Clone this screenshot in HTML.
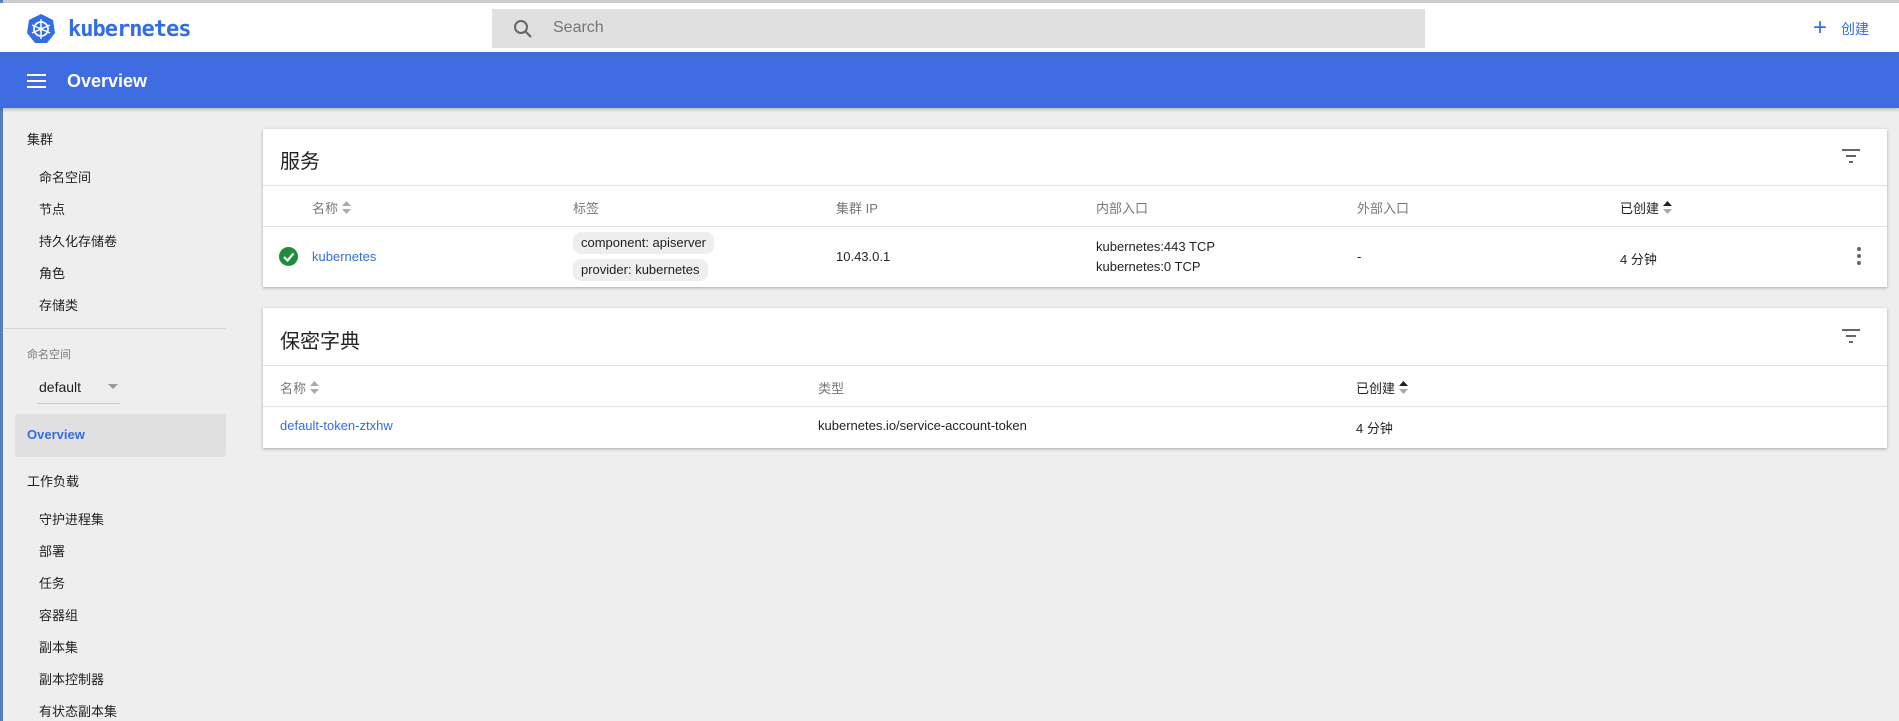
<!DOCTYPE html>
<html><head><meta charset="utf-8"><style>
*{margin:0;padding:0;box-sizing:border-box}
body{width:1899px;height:721px;overflow:hidden;background:#eeeeee;font-family:"Liberation Sans","Noto Sans CJK SC",sans-serif;font-size:13px;color:rgba(0,0,0,.87);position:relative}
.a{position:absolute;white-space:nowrap}
.hdr{position:absolute;left:0;top:3px;width:1899px;height:49px;background:#fff}
.blue{position:absolute;left:0;top:52px;width:1899px;height:56px;background:#3f6ce1;box-shadow:0 2px 3px rgba(0,0,0,.2)}
.card{position:absolute;left:263px;width:1624px;background:#fff;box-shadow:0 1px 3px rgba(0,0,0,.3)}
.line{position:absolute;left:0;width:100%;height:1px;background:#e0e0e0}
.th{color:rgba(0,0,0,.54)}
.lnk{color:#326de6}
.chip{position:absolute;background:#eeeeee;border-radius:8px;height:22px;line-height:22px;padding:0 8px}
.side{font-size:13px}
.srt{display:inline-block;vertical-align:-2px;margin-left:4px}
</style></head><body>
<div class="a" style="left:0;top:0;width:1899px;height:3px;background:#ccc"></div>
<div class="a" style="left:0;top:0;width:3px;height:721px;background:#5a7fb8"></div>
<div class="hdr"></div>
<svg class="a" style="left:26px;top:13px" width="30" height="31" viewBox="0 0 30 31"><polygon points="15,1 27,7 29,20 21,30 9,30 1,20 3,7" fill="#326de6"/><circle cx="15" cy="16" r="7" fill="none" stroke="#fff" stroke-width="1.8"/><g stroke="#fff" stroke-width="1.5"><line x1="15" y1="6" x2="15" y2="26"/><line x1="6" y1="12" x2="24" y2="20"/><line x1="6" y1="20" x2="24" y2="12"/></g><circle cx="15" cy="16" r="2" fill="#fff"/></svg>
<div class="a" style="left:68px;top:17px;font-size:22px;font-weight:bold;color:#326de6;font-family:'DejaVu Sans Mono','Liberation Mono',monospace;letter-spacing:-1px">kubernetes</div>
<div class="a" style="left:492px;top:9px;width:933px;height:39px;background:#e0e0e0"></div>
<svg class="a" style="left:513px;top:19px" width="20" height="20" viewBox="0 0 20 20"><circle cx="8" cy="8" r="6" fill="none" stroke="#666" stroke-width="2"/><line x1="12.5" y1="12.5" x2="18" y2="18" stroke="#666" stroke-width="2.2"/></svg>
<div class="a" style="left:553px;top:19px;font-size:16px;color:#757575">Search</div>
<div class="a" style="left:1813px;top:14px;font-size:24px;color:#326de6;font-weight:300">+</div>
<div class="a" style="left:1841px;top:19px;font-size:14px;color:#326de6">创建</div>
<div class="blue"></div>
<svg class="a" style="left:27px;top:73px" width="19" height="16"><rect y="1" width="19" height="2" fill="#fff"/><rect y="7" width="19" height="2" fill="#fff"/><rect y="13" width="19" height="2" fill="#fff"/></svg>
<div class="a" style="left:67px;top:71px;font-size:18px;font-weight:bold;color:#fff">Overview</div>
<!-- sidebar -->
<div class="a side" style="left:27px;top:129px">集群</div>
<div class="a side" style="left:39px;top:167px">命名空间</div>
<div class="a side" style="left:39px;top:199px">节点</div>
<div class="a side" style="left:39px;top:231px">持久化存储卷</div>
<div class="a side" style="left:39px;top:263px">角色</div>
<div class="a side" style="left:39px;top:295px">存储类</div>
<div class="a" style="left:4px;top:328px;width:222px;height:1px;background:#d6d6d6"></div>
<div class="a" style="left:27px;top:346px;font-size:11px;color:rgba(0,0,0,.5)">命名空间</div>
<div class="a" style="left:39px;top:379px;font-size:14px">default</div>
<div class="a" style="left:108px;top:384px;width:0;height:0;border-left:5px solid transparent;border-right:5px solid transparent;border-top:5px solid #999"></div>
<div class="a" style="left:37px;top:403px;width:83px;height:1px;background:#ccc"></div>
<div class="a" style="left:15px;top:414px;width:211px;height:43px;background:#e0e0e0;border-radius:2px"></div>
<div class="a" style="left:27px;top:427px;color:#326de6;font-weight:bold">Overview</div>
<div class="a side" style="left:27px;top:471px">工作负载</div>
<div class="a side" style="left:39px;top:509px">守护进程集</div>
<div class="a side" style="left:39px;top:541px">部署</div>
<div class="a side" style="left:39px;top:573px">任务</div>
<div class="a side" style="left:39px;top:605px">容器组</div>
<div class="a side" style="left:39px;top:637px">副本集</div>
<div class="a side" style="left:39px;top:669px">副本控制器</div>
<div class="a side" style="left:39px;top:701px">有状态副本集</div>
<!-- card 1 -->
<div class="card" style="top:129px;height:158px">
<div class="a" style="left:17px;top:16px;font-size:20px">服务</div>
<svg class="a" style="left:1579px;top:20px" width="18" height="14"><rect y="0" width="18" height="2" fill="#666"/><rect x="4" y="6" width="10" height="2" fill="#666"/><rect x="7" y="12" width="4" height="2" fill="#666"/></svg>
<div class="line" style="top:56px"></div>
<div class="a th" style="left:49px;top:69px">名称<svg class="srt" width="9" height="14"><polygon points="4.5,0 9,5 0,5" fill="#aaa"/><polygon points="0,8 9,8 4.5,13" fill="#aaa"/></svg></div>
<div class="a th" style="left:310px;top:69px">标签</div>
<div class="a th" style="left:573px;top:69px">集群 IP</div>
<div class="a th" style="left:833px;top:69px">内部入口</div>
<div class="a th" style="left:1094px;top:69px">外部入口</div>
<div class="a" style="left:1357px;top:69px">已创建<svg class="srt" width="9" height="14"><polygon points="4.5,0 9,5 0,5" fill="#222"/><polygon points="0,8 9,8 4.5,13" fill="#aaa"/></svg></div>
<div class="line" style="top:97px"></div>
<svg class="a" style="left:16px;top:118px" width="19" height="19"><circle cx="9.5" cy="9.5" r="9.5" fill="#1e8e3e"/><polyline points="5,10 8.5,13.5 14.5,6.5" fill="none" stroke="#fff" stroke-width="2.2"/></svg>
<div class="a lnk" style="left:49px;top:120px">kubernetes</div>
<div class="chip a" style="left:310px;top:103px">component: apiserver</div>
<div class="chip a" style="left:310px;top:130px">provider: kubernetes</div>
<div class="a" style="left:573px;top:120px">10.43.0.1</div>
<div class="a" style="left:833px;top:110px">kubernetes:443 TCP</div>
<div class="a" style="left:833px;top:130px">kubernetes:0 TCP</div>
<div class="a" style="left:1094px;top:120px">-</div>
<div class="a" style="left:1357px;top:120px">4 分钟</div>
<svg class="a" style="left:1594px;top:118px" width="4" height="18"><circle cx="2" cy="2" r="2" fill="#666"/><circle cx="2" cy="9" r="2" fill="#666"/><circle cx="2" cy="16" r="2" fill="#666"/></svg>
</div>
<!-- card 2 -->
<div class="card" style="top:308px;height:140px">
<div class="a" style="left:17px;top:17px;font-size:20px">保密字典</div>
<svg class="a" style="left:1579px;top:21px" width="18" height="14"><rect y="0" width="18" height="2" fill="#666"/><rect x="4" y="6" width="10" height="2" fill="#666"/><rect x="7" y="12" width="4" height="2" fill="#666"/></svg>
<div class="line" style="top:57px"></div>
<div class="a th" style="left:17px;top:70px">名称<svg class="srt" width="9" height="14"><polygon points="4.5,0 9,5 0,5" fill="#aaa"/><polygon points="0,8 9,8 4.5,13" fill="#aaa"/></svg></div>
<div class="a th" style="left:555px;top:70px">类型</div>
<div class="a" style="left:1093px;top:70px">已创建<svg class="srt" width="9" height="14"><polygon points="4.5,0 9,5 0,5" fill="#222"/><polygon points="0,8 9,8 4.5,13" fill="#aaa"/></svg></div>
<div class="line" style="top:98px"></div>
<div class="a lnk" style="left:17px;top:110px">default-token-ztxhw</div>
<div class="a" style="left:555px;top:110px">kubernetes.io/service-account-token</div>
<div class="a" style="left:1093px;top:110px">4 分钟</div>
</div>
</body></html>
